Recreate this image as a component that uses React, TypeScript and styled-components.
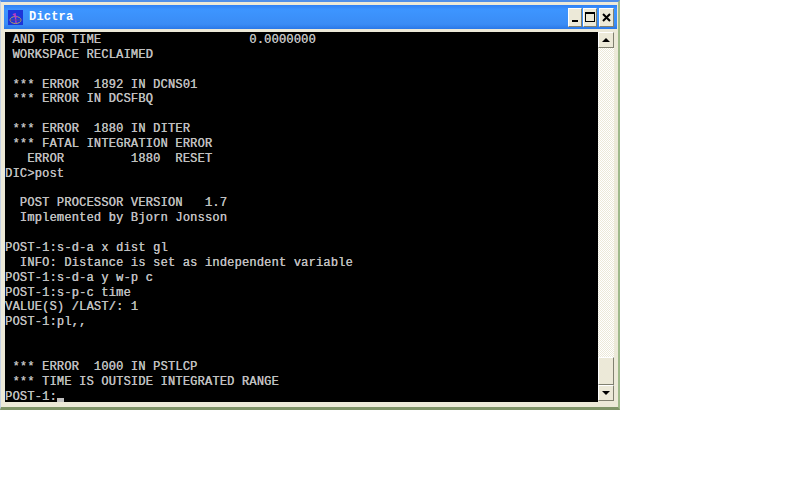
import styled, { createGlobalStyle } from "styled-components";

const GlobalStyle = createGlobalStyle`
  html, body {
    margin: 0;
    padding: 0;
    background: #fff;
  }
`;

const LINES = [
  " AND FOR TIME                    0.0000000",
  " WORKSPACE RECLAIMED",
  "",
  " *** ERROR  1892 IN DCNS01",
  " *** ERROR IN DCSFBQ",
  "",
  " *** ERROR  1880 IN DITER",
  " *** FATAL INTEGRATION ERROR",
  "   ERROR         1880  RESET",
  "DIC>post",
  "",
  "  POST PROCESSOR VERSION   1.7",
  "  Implemented by Bjorn Jonsson",
  "",
  "POST-1:s-d-a x dist gl",
  "  INFO: Distance is set as independent variable",
  "POST-1:s-d-a y w-p c",
  "POST-1:s-p-c time",
  "VALUE(S) /LAST/: 1",
  "POST-1:pl,,",
  "",
  "",
  " *** ERROR  1000 IN PSTLCP",
  " *** TIME IS OUTSIDE INTEGRATED RANGE",
];

const AppIcon = () => (
  <svg width="15" height="15" viewBox="0 0 15 15">
    <rect width="15" height="15" fill="#1c35d8" />
    <ellipse cx="7.5" cy="10" rx="5.5" ry="3.5" fill="none" stroke="#b9a060" strokeWidth="1" />
    <path d="M7 3l1 10M5 4l4 3" stroke="#b93cc8" strokeWidth="1.4" fill="none" />
    <path d="M2 10h11" stroke="#5a4a90" strokeWidth="1" />
  </svg>
);

const App = () => {
  return (
    <>
      <GlobalStyle />
      <Page>
        <Window>
          <TitleBar>
            <AppIcon />
            <Title>Dictra</Title>
            <Controls>
              <CtrlButton>
                <MinGlyph />
              </CtrlButton>
              <CtrlButton>
                <MaxGlyph />
              </CtrlButton>
              <CloseButton>
                <svg width="9" height="9" viewBox="0 0 9 9">
                  <path d="M1 1l7 7M8 1L1 8" stroke="#000" strokeWidth="2" />
                </svg>
              </CloseButton>
            </Controls>
          </TitleBar>
          <Body>
            <Terminal>
              {LINES.map((line, i) => (
                <Line key={i}>{line}</Line>
              ))}
              <Line>
                POST-1:<Cursor />
              </Line>
            </Terminal>
            <ScrollBar>
              <ScrollButton>
                <Arrow $up />
              </ScrollButton>
              <Track>
                <Thumb />
              </Track>
              <ScrollButton>
                <Arrow />
              </ScrollButton>
            </ScrollBar>
          </Body>
        </Window>
      </Page>
    </>
  );
};

const Page = styled.div`
  width: 800px;
  height: 500px;
  background: #fff;
  overflow: hidden;
`;

const Window = styled.div`
  width: 620px;
  height: 410px;
  box-sizing: border-box;
  display: flex;
  flex-direction: column;
  background: #ece9d8;
  border-top: 2px solid #4f8ee8;
  border-left: 1px solid #c4d2e4;
  border-right: 2px solid #9fb98a;
  border-bottom: 3px solid #7f9468;
  padding: 3px 4px 5px 4px;
`;

const TitleBar = styled.div`
  height: 24px;
  flex: none;
  display: flex;
  align-items: center;
  margin: 0 -3px 0 -1px;
  padding: 0 3px 0 4px;
  background: linear-gradient(to bottom, #2f80f5, #3d95ff 20%, #3a8cf5 80%, #2a78e8);
  color: #fff;
`;

const Title = styled.span`
  margin-left: 6px;
  font-family: "Liberation Mono", monospace;
  font-weight: bold;
  font-size: 12px;
  letter-spacing: 0.2px;
`;

const Controls = styled.div`
  margin-left: auto;
  display: flex;
  gap: 1px;
`;

const CtrlButton = styled.div`
  width: 14px;
  height: 19px;
  box-sizing: border-box;
  display: flex;
  align-items: center;
  justify-content: center;
  background: #ece9d8;
  border: 1px solid;
  border-color: #fff #808070 #808070 #fff;
`;

const CloseButton = styled(CtrlButton)`
  width: 15px;
  margin-left: 1px;
`;

const MinGlyph = styled.div`
  width: 6px;
  height: 2px;
  background: #000;
  margin-top: 8px;
`;

const MaxGlyph = styled.div`
  width: 10px;
  height: 10px;
  box-sizing: border-box;
  border: 1px solid #000;
  border-top-width: 2px;
`;

const Body = styled.div`
  flex: 1;
  min-height: 0;
  display: flex;
  margin-top: 3px;
`;

const Terminal = styled.div`
  width: 593px;
  flex: none;
  box-sizing: border-box;
  background: #000;
  padding: 1px 0 0 0;
`;

const Line = styled.div`
  height: 14.87px;
  line-height: 14.87px;
  white-space: pre;
  font-family: "Liberation Mono", monospace;
  font-size: 12px;
  letter-spacing: 0.2px;
  color: #c0c0c0;
  text-shadow: 0.3px 0 0 #c0c0c0;
`;

const Cursor = styled.span`
  display: inline-block;
  width: 7px;
  height: 4px;
  background: #c0c0c0;
  vertical-align: -2px;
`;

const ScrollBar = styled.div`
  width: 16px;
  flex: none;
  display: flex;
  flex-direction: column;
  margin-bottom: 1px;
`;

const ScrollButton = styled.div`
  height: 16px;
  flex: none;
  box-sizing: border-box;
  display: flex;
  align-items: center;
  justify-content: center;
  background: #ece9d8;
  border: 1px solid;
  border-color: #fff #808070 #808070 #fff;
`;

const Arrow = styled.div<{ $up?: boolean }>`
  width: 0;
  height: 0;
  border-left: 4px solid transparent;
  border-right: 4px solid transparent;
  ${(p) =>
    p.$up ? "border-bottom: 4px solid #000;" : "border-top: 4px solid #000;"}
`;

const Track = styled.div`
  flex: 1;
  min-height: 0;
  display: flex;
  flex-direction: column;
  justify-content: flex-end;
  background-color: #f5f4ea;
  background-image: conic-gradient(#fff 25%, #ece9d8 0 50%, #fff 0 75%, #ece9d8 0);
  background-size: 2px 2px;
`;

const Thumb = styled.div`
  height: 28px;
  box-sizing: border-box;
  background: #ece9d8;
  border: 1px solid;
  border-color: #fff #808070 #808070 #fff;
`;

export default App;
